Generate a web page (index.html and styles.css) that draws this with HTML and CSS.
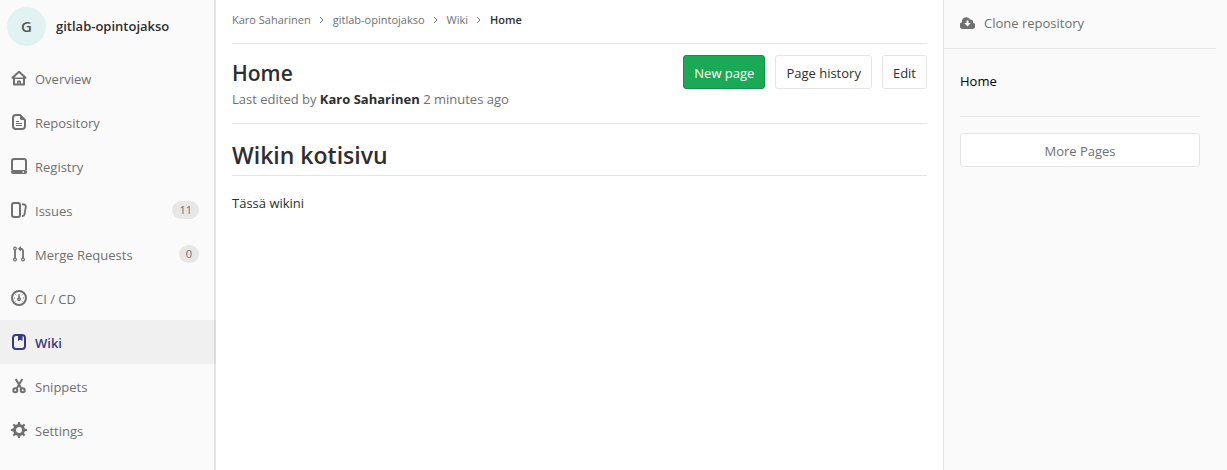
FILE: index.html
```html
<!DOCTYPE html>
<html lang="en">
<head>
<meta charset="utf-8">
<title>Home · Wiki · gitlab-opintojakso</title>
<link rel="stylesheet" href="styles.css">
</head>
<body>
<div class="layout">
  <nav class="sidebar" aria-label="Project">
    <a class="project" href="#"><span class="avatar">G</span><span class="project-name">gitlab-opintojakso</span></a>
    <ul class="menu">
      <li><a class="item" href="#"><svg class="icon" viewBox="0 0 16 16"><g fill="none" stroke="currentColor" stroke-width="2" stroke-linejoin="round" stroke-linecap="round"><path d="M1.500 7.800 8 1.800l6.500 6"/><path d="M3 8v6.500h10V8"/><path d="M3 8.200h10" stroke-width="1.600"/></g><path d="M6 15v-3.500a1 1 0 0 1 1-1h2a1 1 0 0 1 1 1V15H8.700v-2.500H7.300V15z" fill="currentColor"/></svg>Overview</a></li>
      <li><a class="item" href="#"><svg class="icon" viewBox="0 0 16 16"><path d="M9 1H5a3 3 0 0 0-3 3v8a3 3 0 0 0 3 3h6a3 3 0 0 0 3-3V6z" fill="none" stroke="currentColor" stroke-width="2" stroke-linejoin="round"/><path d="M9 1v3.500A1.500 1.500 0 0 0 10.500 6H14z" fill="currentColor"/><path d="M5 7.500h3M5 9.500h6M5 11.500h6" stroke="currentColor"/></svg>Repository</a></li>
      <li><a class="item" href="#"><svg class="icon" viewBox="0 0 16 16"><path d="M1 12V3a2 2 0 0 1 2-2h10a2 2 0 0 1 2 2v9" fill="none" stroke="currentColor" stroke-width="2"/><path fill="currentColor" fill-rule="evenodd" d="M1.500 12h13a1.500 1.500 0 0 1 1.500 1.500V14a2 2 0 0 1-2 2H2a2 2 0 0 1-2-2v-.5A1.500 1.500 0 0 1 1.500 12zM11.500 13.300v1.400h1.500v-1.400z"/></svg>Registry</a></li>
      <li><a class="item" href="#"><svg class="icon" viewBox="0 0 16 16"><g fill="none" stroke="currentColor" stroke-width="2"><rect x="1" y="1" width="8" height="14" rx="2"/><path d="M11 2.200l2 .3a2 2 0 0 1 1.800 2.300l-1.300 7.500a2 2 0 0 1-2 1.700h-.5" stroke-width="1.800"/></g></svg>Issues<span class="count">11</span></a></li>
      <li><a class="item" href="#"><svg class="icon" viewBox="0 0 16 16"><g fill="none" stroke="currentColor"><circle cx="4" cy="2.500" r="1.300" stroke-width="1.200"/><circle cx="4" cy="13.500" r="1.400" stroke-width="1.200"/><circle cx="12" cy="13.500" r="1.400" stroke-width="1.200"/><path d="M4 4v8M12 12V5a2.300 2.300 0 0 0-2.300-2.300" stroke-width="1.800"/></g><path d="M10 0v5.400L6.800 2.700z" fill="currentColor"/></svg>Merge Requests<span class="count">0</span></a></li>
      <li><a class="item" href="#"><svg class="icon" viewBox="0 0 16 16"><circle cx="8" cy="8" r="7" fill="none" stroke="currentColor" stroke-width="2"/><path d="M7.500 4h1l.4 3.400a1.900 1.900 0 1 1-1.800 0z" fill="currentColor"/><circle cx="8" cy="9" r=".6" fill="#fafafa"/><path d="M3 8h1M12 8h1M4.500 4.500l.7.7M11.500 4.500l-.7.7M4.500 11.500l.7-.7M11.500 11.500l-.7-.7" stroke="currentColor"/></svg>CI / CD</a></li>
      <li><a class="item active" href="#" aria-current="page"><svg class="icon" viewBox="0 0 16 16"><rect x="2" y="1" width="12" height="14" rx="3" fill="none" stroke="currentColor" stroke-width="2"/><path d="M7 1.500h4.500V7L9.250 5.700 7 7z" fill="currentColor"/></svg>Wiki</a></li>
      <li><a class="item" href="#"><svg class="icon" viewBox="0 0 16 16"><g fill="none" stroke="currentColor" stroke-width="2"><circle cx="4.300" cy="12.200" r="2"/><circle cx="11.700" cy="12.200" r="2"/><path d="M4.700 1l5.600 9.600M11.300 1l-5.600 9.600"/></g></svg>Snippets</a></li>
      <li><a class="item" href="#"><svg class="icon" viewBox="0 0 16 16"><circle cx="8" cy="8" r="4.500" fill="none" stroke="currentColor" stroke-width="3"/><path fill="currentColor" d="M6.500 3 7 0h2l.5 3zM6.500 13l.5 3h2l.5-3zM3 6.500 0 7v2l3 .5zM13 6.500l3 .5v2l-3 .5zM3.400 5.500 1.700 3.100l1.400-1.400 2.400 1.700zM12.600 5.500l1.700-2.400-1.400-1.400-2.400 1.700zM3.400 10.500l-1.700 2.400 1.400 1.400 2.400-1.700zM12.600 10.500l1.700 2.400-1.400 1.400-2.400-1.700z"/></svg>Settings</a></li>
    </ul>
  </nav>

  <main class="content">
    <nav class="breadcrumbs" aria-label="Breadcrumb">
      <a href="#">Karo Saharinen</a>
      <svg class="chevron" viewBox="0 0 8 8"><path d="M2 1l3 3-3 3"/></svg>
      <a href="#">gitlab-opintojakso</a>
      <svg class="chevron" viewBox="0 0 8 8"><path d="M2 1l3 3-3 3"/></svg>
      <a href="#">Wiki</a>
      <svg class="chevron" viewBox="0 0 8 8"><path d="M2 1l3 3-3 3"/></svg>
      <a class="current" href="#" aria-current="page">Home</a>
    </nav>
    <header class="page-header">
      <div>
        <h2 class="page-title">Home</h2>
        <p class="edited">Last edited by <strong>Karo Saharinen</strong> <time>2 minutes ago</time></p>
      </div>
      <div class="actions">
        <button class="btn btn-new" type="button">New page</button>
        <button class="btn" type="button">Page history</button>
        <button class="btn" type="button">Edit</button>
      </div>
    </header>
    <article class="wiki">
      <h1>Wikin kotisivu</h1>
      <p>Tässä wikini</p>
    </article>
  </main>

  <aside class="right">
    <div class="clone"><a href="#"><svg class="cloud" viewBox="0 0 15 12"><path fill="currentColor" fill-rule="evenodd" d="M3.500 12A3.500 3.500 0 0 1 2 5.200 4.300 4.300 0 0 1 10 2.500 2.500 2.500 0 0 1 13 5.700 3.200 3.200 0 0 1 12 12zM6.500 3.500V6H4.300l3.200 3.400L10.700 6H8.500V3.500z"/></svg>Clone repository</a></div>
    <div class="pages">
      <a class="page-link" href="#">Home</a>
      <button class="btn btn-more" type="button">More Pages</button>
    </div>
  </aside>
</div>
</body>
</html>
```
FILE: styles.css
```css
* { box-sizing: border-box; }

body {
  margin: 0;
  font: 13px/20px "Open Sans", "Noto Sans", sans-serif;
  color: #2e2e2e;
  background: #fff;
}

a { color: inherit; text-decoration: none; }

h1, h2, p, ul { margin: 0; padding: 0; }

.layout {
  display: grid;
  grid-template-columns: 216px minmax(0, 1fr) 284px;
  min-height: 100vh;
}

.sidebar {
  background: #fafafa;
  box-shadow: inset -2px 0 0 #e5e5e5;
}

.project {
  display: flex;
  align-items: center;
  gap: 10px;
  height: 56px;
  padding: 0 7px 4px;
}

.avatar {
  width: 39px;
  height: 39px;
  border-radius: 50%;
  background: #e0f2f1;
  color: #555;
  font-size: 15px;
  font-weight: 600;
  line-height: 39px;
  text-align: center;
}

.project-name { font-weight: 600; }

.menu { list-style: none; }

.item {
  display: flex;
  align-items: center;
  gap: 8px;
  height: 44px;
  padding: 2px 17px 0 11px;
  color: #707070;
}

.item.active {
  background: rgba(0, 0, 0, 0.04);
  color: #393982;
  font-weight: 600;
}

.icon { width: 16px; height: 16px; margin-bottom: 2px; }

.count {
  margin: 0 0 2px auto;
  padding: 0 7px;
  border-radius: 9px;
  background: #e7e7e7;
  font-size: 11px;
  line-height: 18px;
}

.content { padding: 0 16px; }

.breadcrumbs {
  display: flex;
  align-items: center;
  gap: 7px;
  height: 44px;
  padding-bottom: 4px;
  border-bottom: 1px solid #e5e5e5;
  color: #707070;
  font-size: 11px;
}

.breadcrumbs .current { color: #2e2e2e; font-weight: 600; }

.chevron {
  width: 8px;
  height: 8px;
  fill: none;
  stroke: #707070;
}

.page-header {
  display: flex;
  justify-content: space-between;
  height: 80px;
  padding-top: 11px;
  border-bottom: 1px solid #e5e5e5;
}

.page-title {
  padding: 3px 0 1px;
  font-size: 21px;
  font-weight: 600;
  line-height: 30px;
}

.edited { color: #707070; }

.edited strong { color: #2e2e2e; font-weight: 700; }

.actions { display: flex; align-items: flex-start; gap: 10px; }

.btn {
  height: 34px;
  padding: 2px 10px 0;
  border: 1px solid #e5e5e5;
  border-radius: 3px;
  background: #fff;
  color: #2e2e2e;
  font: inherit;
}

.btn-new {
  border-color: #168f48;
  background: #1aaa55;
  color: #fff;
}

.wiki h1 {
  margin-bottom: 17px;
  padding: 15px 0 4px;
  border-bottom: 1px solid #e5e5e5;
  font-size: 23px;
  font-weight: 600;
  line-height: 32px;
}

.right {
  padding-right: 11px;
  border-left: 1px solid #e5e5e5;
  background: #fafafa;
  color: #707070;
}

.clone {
  padding: 13px 16px 15px;
  border-bottom: 1px solid #e5e5e5;
}

.clone a { display: flex; align-items: center; gap: 9px; }

.cloud { width: 15px; height: 12px; }

.pages { padding: 22px 16px; }

.page-link {
  display: block;
  padding-bottom: 25px;
  border-bottom: 1px solid #e5e5e5;
  color: #000;
}

.btn-more {
  width: 100%;
  margin-top: 16px;
  color: #707070;
}
```
